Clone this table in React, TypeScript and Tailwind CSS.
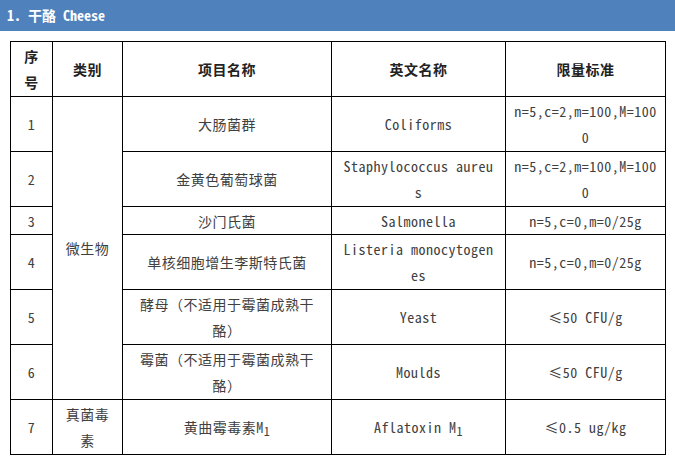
import React from 'react';

const font = { fontFamily: '"Noto Sans Mono CJK SC", "Noto Sans CJK SC", "Liberation Mono", monospace' };

interface Row {
  no: string;
  name: React.ReactNode;
  en: React.ReactNode;
  limit: React.ReactNode;
  h: string;
}

const rows: Row[] = [
  { no: '1', name: '大肠菌群', en: 'Coliforms', limit: <>n=5,c=2,m=100,M=100<br />0</>, h: 'h-[55px]' },
  { no: '2', name: '金黄色葡萄球菌', en: <>Staphylococcus aureu<br />s</>, limit: <>n=5,c=2,m=100,M=100<br />0</>, h: 'h-[55px]' },
  { no: '3', name: '沙门氏菌', en: 'Salmonella', limit: 'n=5,c=0,m=0/25g', h: 'h-[28px]' },
  { no: '4', name: '单核细胞增生李斯特氏菌', en: <>Listeria monocytogen<br />es</>, limit: 'n=5,c=0,m=0/25g', h: 'h-[55px]' },
  { no: '5', name: <>酵母（不适用于霉菌成熟干<br />酪）</>, en: 'Yeast', limit: '≤50 CFU/g', h: 'h-[55px]' },
  { no: '6', name: <>霉菌（不适用于霉菌成熟干<br />酪）</>, en: 'Moulds', limit: '≤50 CFU/g', h: 'h-[55px]' },
];

const cell = 'border border-black text-center align-middle p-0 leading-[26px]';

export default function App() {
  return (
    <div className="w-[675px] h-[465px] bg-white overflow-hidden text-[14px] tracking-[0.5px]" style={font}>
      <div className="h-[31px] bg-[#4f81bd] flex items-center pl-[7px] text-white font-bold tracking-normal">
        1. 干酪 Cheese
      </div>
      <table className="ml-[10px] mt-[10px] w-[655px] table-fixed border-collapse text-[#404040]">
        <colgroup>
          <col className="w-[42px]" />
          <col className="w-[70px]" />
          <col className="w-[209px]" />
          <col className="w-[174px]" />
          <col className="w-[160px]" />
        </colgroup>
        <thead>
          <tr className="h-[55px] font-bold text-[#222]">
            <th className={cell}>序<br />号</th>
            <th className={cell}>类别</th>
            <th className={cell}>项目名称</th>
            <th className={cell}>英文名称</th>
            <th className={cell}>限量标准</th>
          </tr>
        </thead>
        <tbody>
          {rows.map((r, i) => (
            <tr key={r.no} className={r.h}>
              <td className={cell}>{r.no}</td>
              {i === 0 && (
                <td className={cell} rowSpan={6}>微生物</td>
              )}
              <td className={cell}>{r.name}</td>
              <td className={cell}>{r.en}</td>
              <td className={cell}>{r.limit}</td>
            </tr>
          ))}
          <tr className="h-[55px]">
            <td className={cell}>7</td>
            <td className={cell}>真菌毒<br />素</td>
            <td className={cell}>黄曲霉毒素M<sub className="text-[12px] relative top-[3px]">1</sub></td>
            <td className={cell}>Aflatoxin M<sub className="text-[12px] relative top-[3px]">1</sub></td>
            <td className={cell}>≤0.5 ug/kg</td>
          </tr>
        </tbody>
      </table>
    </div>
  );
}
